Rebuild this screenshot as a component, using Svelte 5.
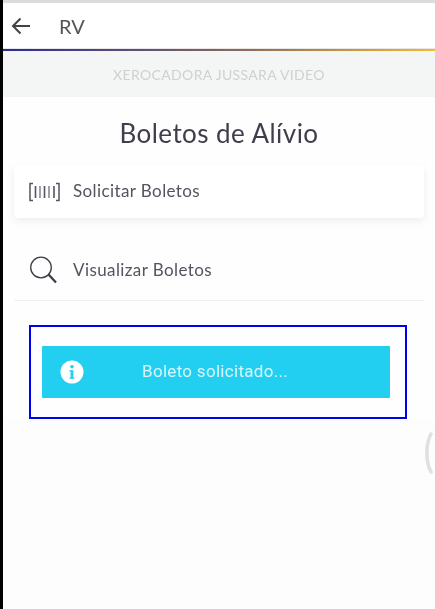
<script>
  // code bars of the "solicitar" icon: x position and stroke width
  const bars = [
    [6.5, 1.6],
    [11, 1.1],
    [15.5, 1.6],
    [20, 1.1],
    [25, 1.6]
  ];
</script>

<div class="screen">
  <div class="page">
    <header class="topbar">
      <svg class="soft" width="20" height="18" viewBox="0 0 20 18" fill="none" stroke="#444" stroke-width="2">
        <path d="M19 9H2M9.5 1.5 2 9l7.5 7.5" />
      </svg>
      <span class="title soft">RV</span>
    </header>
    <div class="rule"></div>
    <div class="company"><span class="soft">XEROCADORA JUSSARA VIDEO</span></div>

    <main class="content">
      <h1 class="soft">Boletos de Alívio</h1>

      <div class="card">
        <svg class="soft" width="31" height="20" viewBox="0 0 31 20" fill="none" stroke="#55535f" stroke-width="1.5">
          <path d="M4 1.5H1v17h3M27 1.5h3v17h-3" />
          {#each bars as [x, w]}
            <path d="M{x} 4v12" stroke-width={w} />
          {/each}
        </svg>
        <span class="soft">Solicitar Boletos</span>
      </div>

      <div class="row">
        <svg class="soft" width="28" height="28" viewBox="0 0 28 28" fill="none" stroke="#3c3b47">
          <circle cx="12" cy="11.5" r="10.3" stroke-width="1.3" />
          <path d="M19.5 18.5 27 26.5" stroke-width="2.2" />
        </svg>
        <span class="soft">Visualizar Boletos</span>
      </div>

      <div class="notice-wrap">
        <div class="notice">
          <svg class="soft" width="24" height="24" viewBox="0 0 24 24">
            <circle cx="12" cy="12" r="11.5" fill="#fff" />
            <rect x="10.6" y="10.2" width="2.8" height="8.2" fill="#22cff0" />
            <rect x="9.4" y="10.2" width="2" height="1.2" fill="#22cff0" />
            <rect x="9.4" y="17.4" width="5.2" height="1.2" fill="#22cff0" />
            <circle cx="12" cy="6.8" r="1.8" fill="#22cff0" />
          </svg>
          <span class="soft">Boleto solicitado...</span>
        </div>
      </div>

      <svg class="spinner soft" width="12" height="42" viewBox="0 0 12 42" fill="none">
        <path d="M9 2C3.5 12 3.5 30 9 40" stroke="#e0e0e0" stroke-width="3.5" stroke-linecap="round" />
      </svg>
    </main>
  </div>
</div>

<style>
  :global(body) {
    margin: 0;
    background: #000;
  }

  .screen {
    width: 435px;
    height: 609px;
    box-sizing: border-box;
    padding-left: 3px;
    overflow: hidden;
    background: #000;
    font-family: Lato, "Open Sans", sans-serif;
  }

  .page {
    height: 100%;
    background: #fdfdfd;
    padding-top: 3px;
    box-sizing: border-box;
    box-shadow: inset 0 3px 0 #dcdcdc;
  }

  .soft {
    filter: blur(0.4px);
  }

  .topbar {
    height: 45px;
    display: flex;
    align-items: center;
    background: #fff;
    padding-left: 8px;
    border-bottom: 1px solid #e6e6e6;
  }

  .title {
    margin-left: 28px;
    font-size: 20px;
    color: #555;
  }

  .rule {
    height: 2px;
    background: linear-gradient(to right, #2a2a9a, #8a6a5a 55%, #f5b830);
  }

  .company {
    height: 46px;
    display: flex;
    align-items: center;
    justify-content: center;
    background: #f4f5f5;
    font-size: 14px;
    letter-spacing: 0.35px;
    color: #cfd0d0;
  }

  .content {
    position: relative;
    padding: 0 11px;
    background: #fefefe;
  }

  h1 {
    margin: 0;
    padding-top: 20px;
    text-align: center;
    font-size: 26px;
    font-weight: 400;
    letter-spacing: 0.45px;
    line-height: 32px;
    color: #3f3e4c;
  }

  .card {
    height: 53px;
    margin-top: 16px;
    display: flex;
    align-items: center;
    gap: 13px;
    padding-left: 15px;
    background: #fff;
    border-radius: 4px;
    box-shadow: 0 3px 8px rgba(0, 0, 0, 0.07);
    font-size: 17px;
    letter-spacing: 0.4px;
    color: #55535f;
  }

  .card span,
  .row span {
    margin-top: -2px;
  }

  .row {
    height: 61px;
    margin-top: 22px;
    padding-left: 15px;
    display: flex;
    align-items: center;
    gap: 16px;
    box-sizing: border-box;
    border-bottom: 1px solid #f0f0f0;
    font-size: 17px;
    letter-spacing: 0.4px;
    color: #55535f;
  }

  .notice-wrap {
    margin: 24px 0 0 15px;
    width: 378px;
    height: 94px;
    box-sizing: border-box;
    padding: 19px 15px 0 11px;
    border: 2px solid #0000f0;
  }

  .notice {
    height: 52px;
    display: flex;
    align-items: center;
    padding-left: 18px;
    background: #22cff0;
    border-radius: 1px;
    font-family: Roboto, sans-serif;
    font-size: 17px;
    letter-spacing: 0.3px;
    color: #d8f5fb;
  }

  .notice span {
    margin: -2px 0 0 58px;
  }

  .spinner {
    position: absolute;
    left: 419px;
    top: 335px;
  }
</style>
